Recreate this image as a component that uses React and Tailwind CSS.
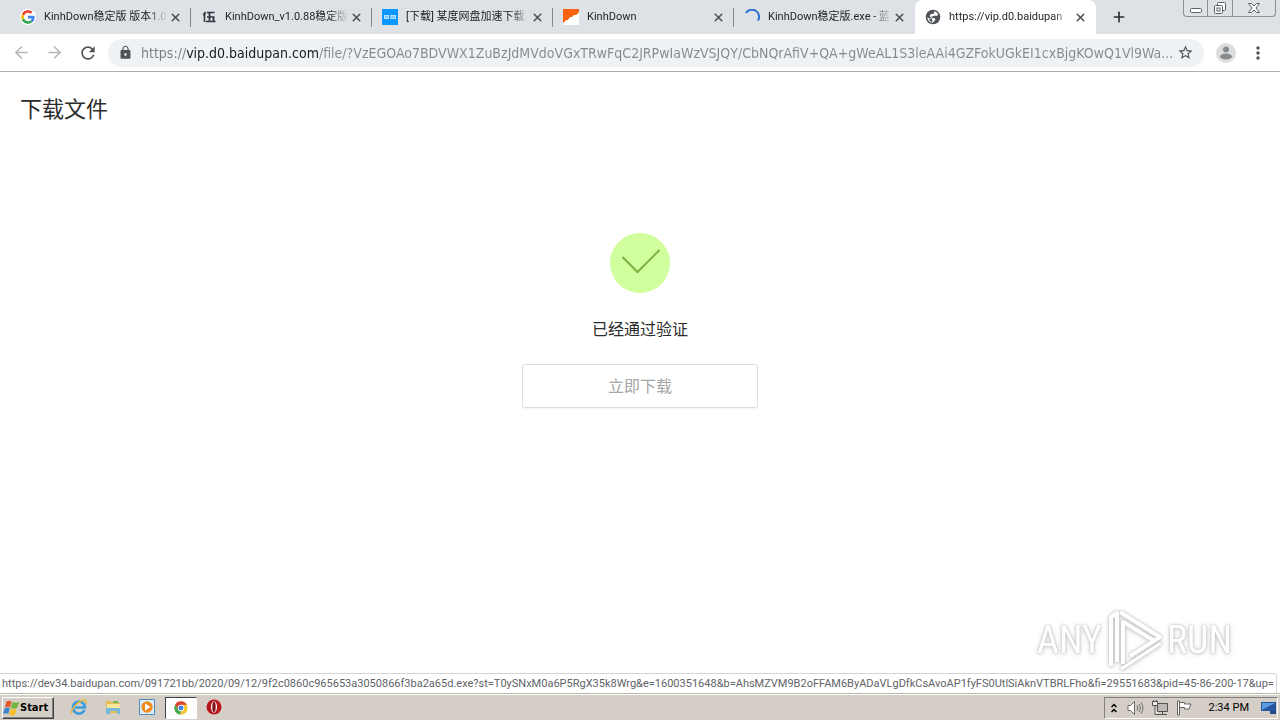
import React from "react";
import { ArrowLeft, ArrowRight, Plus, X } from "lucide-react";
import { MdLock, MdRefresh, MdStarBorder, MdMoreVert } from "react-icons/md";

function GoogleIcon() {
  return (
    <svg viewBox="0 0 48 48" className="size-4 shrink-0 rounded-full bg-white p-px">
      <path fill="#EA4335" d="M24 9.5c3.54 0 6.71 1.22 9.21 3.6l6.85-6.85C35.9 2.38 30.47 0 24 0 14.62 0 6.51 5.38 2.56 13.22l7.98 6.19C12.43 13.72 17.74 9.5 24 9.5z" />
      <path fill="#4285F4" d="M46.98 24.55c0-1.57-.15-3.09-.38-4.55H24v9.02h12.94c-.58 2.96-2.26 5.48-4.78 7.18l7.73 6c4.51-4.18 7.09-10.36 7.09-17.65z" />
      <path fill="#FBBC05" d="M10.53 28.59c-.48-1.45-.76-2.99-.76-4.59s.27-3.14.76-4.59l-7.98-6.19C.92 16.46 0 20.12 0 24c0 3.88.92 7.54 2.56 10.78l7.97-6.19z" />
      <path fill="#34A853" d="M24 48c6.48 0 11.93-2.13 15.89-5.81l-7.73-6c-2.15 1.45-4.92 2.3-8.16 2.3-6.26 0-11.57-4.22-13.47-9.91l-7.98 6.19C6.51 42.62 14.62 48 24 48z" />
    </svg>
  );
}

function WuIcon() {
  return (
    <svg viewBox="0 0 16 16" className="size-4 shrink-0" fill="none" stroke="#33363c">
      <path d="M3.500 4v9M6 3.500h7.500M6 8h7.500M5 12.500h9.500" strokeWidth="1.600" />
      <path d="M4.500 3 2.500 6.500M8.500 4v8M12.500 8v4" strokeWidth="1.800" />
    </svg>
  );
}

function BlueIcon() {
  return (
    <svg viewBox="0 0 16 16" className="size-4 shrink-0">
      <path fill="#0c96ff" d="M0 0h16v16H0z" />
      <path fill="#7cc6ff" d="M2 6h5v4H2zM8.500 6h5.500v4H8.500z" />
      <path stroke="#c9e8ff" d="M2 6.500h5M2 9.500h5M8.500 6.500H14M8.500 9.500H14M2.500 6v4M6.500 6v4M9 6v4M13.500 6v4" strokeWidth=".7" />
    </svg>
  );
}

function OrangeIcon() {
  return (
    <svg viewBox="0 0 16 16" className="size-4 shrink-0">
      <path fill="#fff" d="M0 0h16v16H0z" />
      <path fill="#fa6410" d="M0 0h16v2.500c-1 2-2 4-4 3.500-1.500-.3-2 2-3.500 2-1 0-2 0-2.500 1.500-.5 2-2 1-3 2C2 12.500 1 13 0 14z" />
    </svg>
  );
}

function SpinnerIcon() {
  return (
    <svg viewBox="0 0 16 16" className="size-4 shrink-0" fill="none" stroke="#2a6fd6" strokeWidth="2">
      <path d="M2 4A6.700 6.700 0 0 1 14 11.500" />
    </svg>
  );
}

function GlobeIcon() {
  return (
    <svg viewBox="0 0 16 16" className="size-4 shrink-0">
      <circle cx="8" cy="8" r="7.300" fill="#4f5357" />
      <path fill="#fff" d="M9.500 2.300c1.800.5 3 1.700 3.700 3.200L11.500 7l-2-.5L8 7.500H6L7 9h2l1.500 1-1 2L7.500 13.700C4.500 13.500 2.500 11 2.300 8.500L4.500 9.500 6 8.500 4.500 7 6 5h2.500z" />
      <path fill="#4f5357" d="M4.500 9.500h2.500L7.500 12l-1 1-2-1.500z" />
    </svg>
  );
}

const tabs = [
  { title: "KinhDown稳定版 版本1.0", Icon: GoogleIcon },
  { title: "KinhDown_v1.0.88稳定版", Icon: WuIcon },
  { title: "[下载] 某度网盘加速下载", Icon: BlueIcon },
  { title: "KinhDown", Icon: OrangeIcon },
  { title: "KinhDown稳定版.exe - 蓝", Icon: SpinnerIcon },
  { title: "https://vip.d0.baidupan", Icon: GlobeIcon, active: true },
];

function Tab({ title, Icon, active, divider }) {
  return (
    <div
      className={
        "flex min-w-0 flex-[0_1_181px] items-center pr-2 pl-2.5 " +
        (active ? "rounded-t-lg bg-white" : divider ? "bg-[linear-gradient(#85888d,#85888d)] bg-[length:1px_19px] bg-[position:right_center] bg-no-repeat" : "")
      }
    >
      <button type="button" role="tab" aria-selected={!!active} className="flex min-w-0 flex-1 items-center gap-2 text-left text-[11px] text-[#222529]">
        <Icon />
        <span className="flex-1 overflow-hidden whitespace-nowrap [mask-image:linear-gradient(to_right,#000_85%,transparent)]">{title}</span>
      </button>
      <button type="button" aria-label={"Close " + title} className="flex size-4 items-center justify-center text-[#505458]">
        <X size={13} strokeWidth={3} />
      </button>
    </div>
  );
}

function WindowControls() {
  return (
    <div className="mr-1 ml-auto flex h-[17px] rounded-b border border-t-0 border-[#8a8f98] text-[#5a6069]">
      <button type="button" aria-label="Minimize" className="flex w-6 items-center justify-center border-r border-[#8a8f98]">
        <svg width="14" height="16" fill="#fff" stroke="currentColor"><rect x="1.500" y="8.500" width="11" height="4" rx="1" /></svg>
      </button>
      <button type="button" aria-label="Restore" className="flex w-[25px] items-center justify-center border-r border-[#8a8f98]">
        <svg width="14" height="16" fill="#fff" stroke="currentColor">
          <rect x="4.500" y="2.500" width="8" height="8" rx="1" /><rect x="1.500" y="5.500" width="8" height="8" rx="1" /><rect x="4" y="8" width="3" height="3" />
        </svg>
      </button>
      <button type="button" aria-label="Close" className="flex w-[42px] items-center justify-center">
        <svg width="14" height="16" fill="#fff" stroke="currentColor">
          <path d="M1.500 3.500h3L7 6l2.500-2.500h3L9 8l3.500 4.500h-3L7 10l-2.500 2.500h-3L5 8z" />
        </svg>
      </button>
    </div>
  );
}

const url =
  "https://vip.d0.baidupan.com/file/?VzEGOAo7BDVWX1ZuBzJdMVdoVGxTRwFqC2JRPwIaWzVSJQY/CbNQrAfiV+QA+gWeAL1S3leAAi4GZFokUGkEI1cxBjgKOwQ1Vl9Wa...";

function Toolbar() {
  return (
    <div className="flex h-[38px] items-center border-b border-[#acaead] bg-white text-[#505458]">
      <div className="flex w-[108px] items-center gap-3.5 pl-3">
        <button type="button" aria-label="Back" className="text-[#b4b6b9]"><ArrowLeft size={19} /></button>
        <button type="button" aria-label="Forward" className="text-[#b4b6b9]"><ArrowRight size={19} /></button>
        <button type="button" aria-label="Reload"><MdRefresh size={20} /></button>
      </div>
      <div className="flex h-7 min-w-0 flex-1 items-center rounded-full bg-[#eff2f5] px-2.5">
        <MdLock size={15} />
        <input
          aria-label="Address"
          readOnly
          value={url}
          className="ml-2 min-w-0 flex-1 bg-[linear-gradient(to_right,#7a7d82_46px,#17191c_46px,#17191c_178px,#85898f_178px)] bg-clip-text font-['DejaVu_Sans_Condensed','DejaVu_Sans',sans-serif] text-sm text-transparent outline-none"
        />
        <button type="button" aria-label="Bookmark this page"><MdStarBorder size={17} /></button>
      </div>
      <button type="button" aria-label="Profile" className="ml-3">
        <svg width="20" height="20" viewBox="0 0 20 20">
          <circle cx="10" cy="10" r="10" fill="#dcddde" /><circle cx="10" cy="6.500" r="3" fill="#898c8f" /><ellipse cx="10" cy="13.500" rx="6" ry="3" fill="#898c8f" />
        </svg>
      </button>
      <button type="button" aria-label="Menu" className="mr-3 ml-3"><MdMoreVert size={20} /></button>
    </div>
  );
}

function Watermark() {
  return (
    <div className="pointer-events-none absolute right-12 bottom-5 flex items-center font-['Roboto_Condensed','Roboto',sans-serif] text-[38px] leading-none text-white [filter:drop-shadow(0_0_1px_#b8b8b8)_drop-shadow(0_1px_2px_#d4d4d4)]">
      <span>ANY</span>
      <svg className="mr-1 ml-1" width="57" height="66" viewBox="3 0 57 66" fill="none" stroke="#fff" strokeWidth="4" strokeLinejoin="round">
        <path d="M8 59V10l6-4v49" />
        <path d="M17 5 57 30 27 49M20 57V15L50 33" />
        <path d="M18 62 58 36" strokeWidth="3" />
      </svg>
      <span>RUN</span>
    </div>
  );
}

function Page() {
  return (
    <main className="relative min-h-0 flex-1 bg-white font-['Noto_Sans','Noto_Sans_CJK_SC',sans-serif] text-[#2c2c2c]">
      <h1 className="px-5 pt-5 text-[22px] leading-8">下载文件</h1>
      <section className="mx-auto flex w-59 flex-col items-center pt-[109px]">
        <svg width="60" height="60" viewBox="0 0 60 60" fill="none">
          <circle cx="30" cy="30" r="30" fill="#d2ff9d" />
          <path d="M12.500 24 27.500 39 49.500 17" stroke="#7faf41" strokeWidth="2" />
        </svg>
        <p className="mt-6 text-base leading-6">已经通过验证</p>
        <button type="button" className="mt-[23px] h-11 w-full rounded-xs border border-[#dedede] text-base text-[#a5a5a5] shadow-xs">立即下载</button>
      </section>
      <Watermark />
      <div className="absolute bottom-0 left-0 h-5 rounded-tr border-t border-r border-[#d5d5d5] bg-white px-0.5 font-['Roboto',sans-serif] text-[11px] leading-[19px] whitespace-nowrap text-[#5f6368]">
        https://dev34.baidupan.com/091721bb/2020/09/12/9f2c0860c965653a3050866f3ba2a65d.exe?st=T0ySNxM0a6P5RgX35k8Wrg&amp;e=1600351648&amp;b=AhsMZVM9B2oFFAM6ByADaVLgDfkCsAvoAP1fyFS0UtlSiAknVTBRLFho&amp;fi=29551683&amp;pid=45-86-200-17&amp;up=
      </div>
    </main>
  );
}

function WindowsFlag() {
  return (
    <svg width="17" height="17" viewBox="0 0 17 17" className="shrink-0">
      <path fill="#e8572a" d="M3.500 1.500c2-1 3.500-1 5 0L7 7.500C5.500 6.500 4 6.500 2 7.300z" />
      <path fill="#73b63f" d="M9.300 2c2 1 4 1 7 0L14 8c-2 1-4 1-6.200 0z" />
      <path fill="#3d83cd" d="M1.700 8.300c2-1 3.500-1 5.100 0L5.300 14c-1.500-1-3-1-5.300 0z" />
      <path fill="#f7bd2c" d="M7.600 8.800c2 1 4 1 6.100 0L12 15c-2 1-4 1-6-.500z" />
    </svg>
  );
}

function IeIcon() {
  return (
    <svg width="18" height="18" viewBox="0 0 18 18" fill="none">
      <path d="M14.500 12A6 6 0 1 1 15 9.500H5" stroke="#3a9ee0" strokeWidth="2.600" />
      <path d="M2 16c-3-2 5-13 12-14 3-.4 2.500 2.500 1.500 4" stroke="#edb732" strokeWidth="1.300" />
    </svg>
  );
}

function FolderIcon() {
  return (
    <svg width="18" height="18" viewBox="0 0 18 18">
      <path fill="#e5bd54" d="M2 3h5l1 2h8v10H2z" /><path fill="#f9e69c" d="M3 6h13v7H3z" />
      <path fill="#75b9dc" d="M2 10h14v6h-3v-3H6v3H2z" /><path fill="#77b94c" d="M9 3h5v2H9z" />
    </svg>
  );
}

function PlayerIcon() {
  return (
    <svg width="18" height="18" viewBox="0 0 18 18">
      <path fill="#d9efff" stroke="#5589b9" d="M1.500 1.500h15v15h-15z" />
      <circle cx="9" cy="9" r="5.700" fill="#f28b1e" /><path fill="#fff" d="m7 5.500 5.500 3.500L7 12.500z" />
    </svg>
  );
}

function ChromeIcon() {
  return (
    <svg width="14" height="14" viewBox="0 0 48 48">
      <circle cx="24" cy="24" r="23" fill="#f4c934" />
      <path fill="#df4536" d="M4.100 12.500A23 23 0 0 1 44 13H24L14.500 29.500z" />
      <path fill="#3fa755" d="M4.100 12.500 14.500 30c2 4 6 6 10 5.500L20 46.600A23 23 0 0 1 4.100 12.500z" />
      <circle cx="24" cy="24" r="11" fill="#fff" /><circle cx="24" cy="24" r="8.500" fill="#4285f4" />
    </svg>
  );
}

function OperaIcon() {
  return (
    <svg width="16" height="16" viewBox="0 0 16 16">
      <circle cx="8" cy="8" r="7.500" fill="#b8151c" /><ellipse cx="8" cy="8" rx="3" ry="5.800" fill="#fff" /><ellipse cx="8" cy="8" rx="1.700" ry="5.200" fill="#7f1016" />
    </svg>
  );
}

function Taskbar() {
  return (
    <footer className="flex h-[27px] shrink-0 items-center border-t border-[#b8b5ae] bg-[#d5cec6] text-[11px] text-black shadow-[inset_0_1px_0_#fff]">
      <button type="button" className="mt-0.5 ml-0.5 flex h-[22px] w-13 items-center border border-t-white border-r-[#404040] border-b-[#404040] border-l-white font-['DejaVu_Sans_Condensed','DejaVu_Sans',sans-serif] text-[11px] font-bold shadow-[inset_-1px_-1px_0_#808080]">
        <WindowsFlag />
        Start
      </button>
      <nav aria-label="Quick launch" className="ml-2 flex items-center">
        <button type="button" aria-label="Internet Explorer" className="flex w-[34px] justify-center"><IeIcon /></button>
        <button type="button" aria-label="Explorer" className="flex w-[34px] justify-center"><FolderIcon /></button>
        <button type="button" aria-label="Media Player" className="flex w-[34px] justify-center"><PlayerIcon /></button>
        <button type="button" aria-label="Chrome" className="mt-0.5 ml-px flex h-[22px] w-8 items-center justify-center border border-t-[#404040] border-r-white border-b-white border-l-[#404040] bg-white"><ChromeIcon /></button>
        <button type="button" aria-label="Opera" className="flex w-[34px] justify-center"><OperaIcon /></button>
      </nav>
      <div className="mt-0.5 mr-0.5 ml-auto flex h-[22px] items-center border border-t-[#808080] border-r-white border-b-white border-l-[#808080] pl-1.5">
        <button type="button" aria-label="Show hidden icons">
          <svg width="6" height="10" viewBox="0 0 6 10" fill="none" stroke="#000" strokeWidth="1.500"><path d="m.5 4 2.500-2.500L5.500 4M.5 9 3 6.500 5.500 9" /></svg>
        </button>
        <button type="button" aria-label="Volume" className="ml-2.5">
          <svg width="17" height="16" viewBox="0 0 17 16" fill="#fff" stroke="#6e6b67">
            <path d="M1 5.500h2.500l4-4v13l-4-4H1z" /><path d="M10 5.500q1.500 2.500 0 5M12 4q3 4 0 8M14 2.500q4 5.500 0 11" fill="none" />
          </svg>
        </button>
        <button type="button" aria-label="Network" className="ml-2">
          <svg width="16" height="16" viewBox="0 0 16 16" fill="#eee" stroke="#55524e">
            <path d="M5.500 3.500h10v8h-10z" fill="#bcb9b4" /><path d="M10.500 12v2.500M6 14.500h9M.500 1.500h5v4h-5zM1.500 0v2M4.500 0v2M3 6v8.500h3" />
          </svg>
        </button>
        <button type="button" aria-label="Action center" className="ml-2">
          <svg width="17" height="16" viewBox="0 0 17 16" fill="#fff" stroke="#67645f"><path d="M1.500 1h2v14h-2zM3.500 2.500h5v1.500h6.500l-2 5H8.500V7.500h-5z" /></svg>
        </button>
        <time className="mr-3 ml-4">2:34 PM</time>
        <button type="button" aria-label="Show desktop">
          <svg width="16" height="14" viewBox="0 0 16 14"><path fill="#23569f" d="M0 1h15v9H0z" /><path fill="#5b9ade" d="M1 2h13L1 9z" /><path fill="#244b86" d="M9 10h6v3H9z" /></svg>
        </button>
      </div>
    </footer>
  );
}

export default function App() {
  return (
    <div className="flex h-screen min-h-90 flex-col overflow-hidden bg-white font-['Roboto','Noto_Sans_CJK_SC',sans-serif]">
      <header className="shrink-0">
        <div className="flex h-[34px] bg-[#dee1e6] pl-2.5">
          <div role="tablist" aria-label="Open tabs" className="flex min-w-0 flex-[0_1_1087px]">
            {tabs.map((tab, i) => <Tab key={tab.title} {...tab} divider={i < 4} />)}
          </div>
          <button type="button" aria-label="New tab" className="ml-3.5 text-[#2d3136]"><Plus size={16} strokeWidth={2.500} /></button>
          <WindowControls />
        </div>
        <Toolbar />
      </header>
      <Page />
      <Taskbar />
    </div>
  );
}
